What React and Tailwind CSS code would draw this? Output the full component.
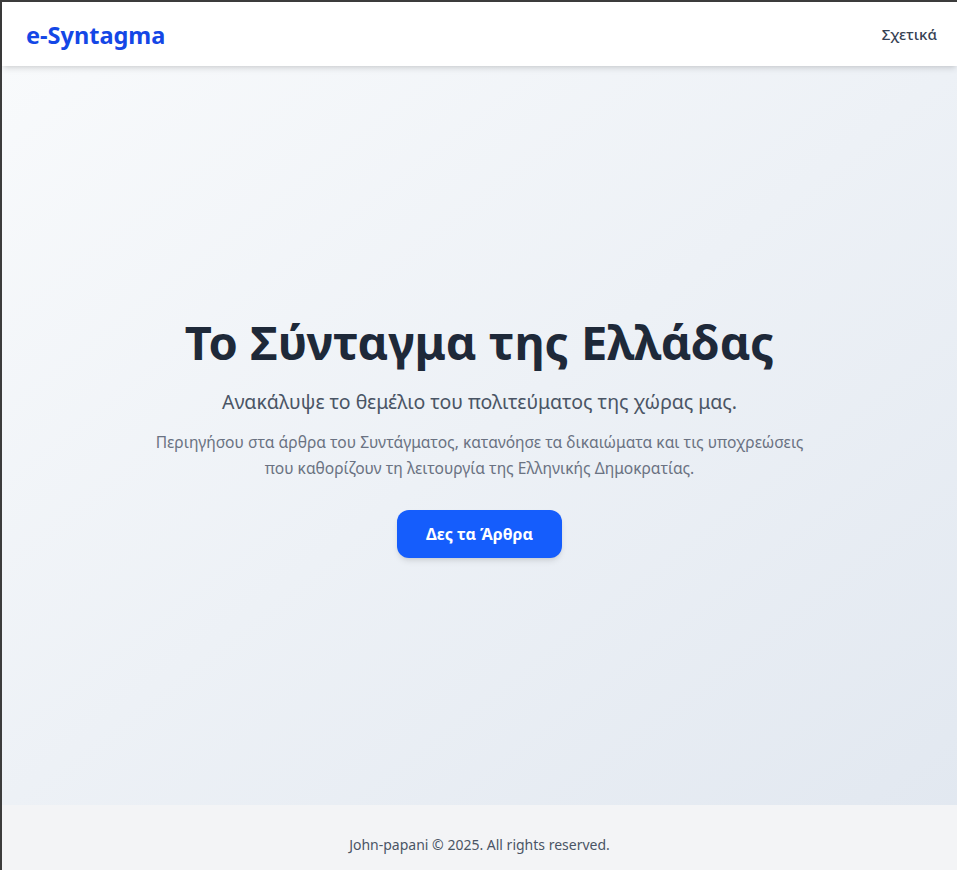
export default function App() {
  return (
    <div className="min-h-screen flex flex-col border-t-2 border-l-2 border-[#3c3c3c] bg-white" style={{ fontFamily: '"Noto Sans", "Open Sans", sans-serif' }}>
      <header className="h-16 bg-white shadow-md flex items-center justify-between pl-6 pr-5 relative z-10">
        <div className="mt-[3px] text-[23.5px] font-bold text-blue-700">e-Syntagma</div>
        <nav className="text-[15px] font-medium text-gray-700">Σχετικά</nav>
      </header>
      <main className="h-[739px] bg-gradient-to-br from-slate-50 to-slate-200 flex flex-col items-center justify-center text-center px-6">
        <h1 className="mt-[5px] text-[47px] leading-none font-bold text-gray-800">Το Σύνταγμα της Ελλάδας</h1>
        <p className="mt-[22px] text-[19.5px] leading-[28px] text-gray-600">Ανακάλυψε το θεμέλιο του πολιτεύματος της χώρας μας.</p>
        <p className="mt-[13px] max-w-[660px] text-[15.6px] leading-[26px] text-gray-500">
          Περιηγήσου στα άρθρα του Συντάγματος, κατανόησε τα δικαιώματα και τις υποχρεώσεις που καθορίζουν τη λειτουργία της Ελληνικής Δημοκρατίας.
        </p>
        <button className="mt-[29px] w-[165px] h-12 rounded-xl bg-blue-600 text-white font-bold shadow-md">Δες τα Άρθρα</button>
      </main>
      <footer className="bg-gray-100 py-[30px] text-center text-sm text-gray-600">
        John-papani © 2025. All rights reserved.
      </footer>
    </div>
  );
}
